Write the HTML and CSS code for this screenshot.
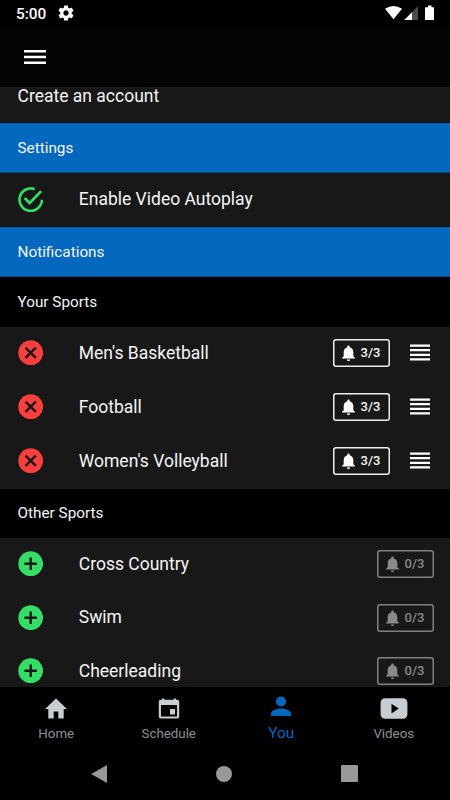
FILE: index.html
```html
<!DOCTYPE html>
<html lang="en">
<head>
    <meta charset="UTF-8">
    <meta name="viewport" content="width=device-width, initial-scale=1.0">
    <title>You</title>
    <link rel="stylesheet" href="styles.css">
</head>
<body>
    <!-- Shared icons -->
    <svg class="sprite" width="0" height="0">
        <symbol id="icon-remove" viewBox="0 0 26 26">
            <circle cx="13" cy="13" r="12.7" fill="#fb3e3e"/>
            <path d="M7.700 7.700l10.600 10.600M18.300 7.700L7.700 18.300" stroke="#181818" stroke-width="2.500"/>
        </symbol>
        <symbol id="icon-add" viewBox="0 0 26 26">
            <circle cx="13" cy="13" r="12.7" fill="#33dd66"/>
            <path d="M13 6.600v12.800M6.600 13h12.800" stroke="#181818" stroke-width="2.500"/>
        </symbol>
        <symbol id="icon-bell" viewBox="4 2 16 20">
            <path d="M12 22c1.100 0 2-.9 2-2h-4c0 1.100.89 2 2 2zm6-6v-5c0-3.070-1.640-5.640-4.500-6.320V4c0-.83-.67-1.500-1.500-1.500s-1.500.67-1.500 1.500v.68C7.630 5.360 6 7.920 6 11v5l-2 2v1h16v-1l-2-2z" fill="currentColor"/>
        </symbol>
        <symbol id="icon-handle" viewBox="0 0 20 17">
            <path d="M0 1.600h20M0 6.200h20M0 10.800h20M0 15.400h20" stroke="#fff" stroke-width="2.300"/>
        </symbol>
    </svg>

    <div class="status-bar">
        <span class="time">5:00</span>
        <svg class="gear" width="16" height="16" viewBox="1.5 1.5 21 21">
            <path fill="#fff" d="M19.430 12.980c.04-.32.07-.64.07-.98s-.03-.66-.07-.98l2.110-1.650c.19-.15.24-.42.12-.64l-2-3.460c-.12-.22-.39-.3-.61-.22l-2.490 1c-.52-.4-1.080-.73-1.690-.98l-.38-2.650C14.460 2.180 14.250 2 14 2h-4c-.25 0-.46.18-.49.42l-.38 2.650c-.61.25-1.170.59-1.690.98l-2.490-1c-.23-.09-.49 0-.61.22l-2 3.460c-.13.22-.07.49.12.64l2.110 1.650c-.04.32-.07.65-.07.98s.03.66.07.98l-2.110 1.650c-.19.15-.24.42-.12.64l2 3.460c.12.22.39.3.61.22l2.490-1c.52.4 1.080.73 1.690.98l.38 2.650c.03.24.24.42.49.42h4c.25 0 .46-.18.49-.42l.38-2.650c.61-.25 1.170-.59 1.690-.98l2.490 1c.23.09.49 0 .61-.22l2-3.460c.12-.22.07-.49-.12-.64l-2.110-1.650zM12 15.500c-1.930 0-3.500-1.570-3.500-3.500s1.570-3.500 3.500-3.500 3.500 1.570 3.500 3.500-1.570 3.500-3.500 3.500z"/>
        </svg>
        <svg class="signals" width="50" height="16" viewBox="0 0 50 16">
            <path fill="#fff" d="M0 3.800Q8.500-1.900 17 3.800L8.500 14.300z"/>
            <path fill="#4d4d4d" d="M19.300 15L33 1.300V15z"/>
            <path fill="#fff" d="M19.300 15L27 7.300V15z"/>
            <path fill="#fff" d="M40 2.200h3V.5h3.500v1.700H49V15h-9z"/>
        </svg>
    </div>

    <div class="app-bar">
        <svg width="22" height="16" viewBox="0 0 22 16">
            <path d="M0 2.200h22M0 8h22M0 13.800h22" stroke="#fff" stroke-width="2.500"/>
        </svg>
    </div>

    <div class="content">
        <div class="row account">Create an account</div>

        <div class="section">Settings</div>
        <div class="row autoplay">
            <svg class="icon" viewBox="0 0 26 26" fill="none" stroke="#33dd66" stroke-width="2.700">
                <path d="M17 2.200A11.500 11.500 0 1 0 24.500 13"/>
                <path d="M6.800 11.300L12 16.400 23.700 4.300"/>
            </svg>
            <span class="name">Enable Video Autoplay</span>
        </div>

        <div class="section">Notifications</div>
        <div class="subsection yours">Your Sports</div>
        <div class="row sport">
            <svg class="icon"><use href="#icon-remove"/></svg>
            <span class="name">Men's Basketball</span>
            <span class="alerts"><svg><use href="#icon-bell"/></svg>3/3</span>
            <svg class="handle"><use href="#icon-handle"/></svg>
        </div>
        <div class="row sport">
            <svg class="icon"><use href="#icon-remove"/></svg>
            <span class="name">Football</span>
            <span class="alerts"><svg><use href="#icon-bell"/></svg>3/3</span>
            <svg class="handle"><use href="#icon-handle"/></svg>
        </div>
        <div class="row sport">
            <svg class="icon"><use href="#icon-remove"/></svg>
            <span class="name">Women's Volleyball</span>
            <span class="alerts"><svg><use href="#icon-bell"/></svg>3/3</span>
            <svg class="handle"><use href="#icon-handle"/></svg>
        </div>

        <div class="subsection">Other Sports</div>
        <div class="row other">
            <svg class="icon"><use href="#icon-add"/></svg>
            <span class="name">Cross Country</span>
            <span class="alerts off"><svg><use href="#icon-bell"/></svg>0/3</span>
        </div>
        <div class="row other">
            <svg class="icon"><use href="#icon-add"/></svg>
            <span class="name">Swim</span>
            <span class="alerts off"><svg><use href="#icon-bell"/></svg>0/3</span>
        </div>
        <div class="row other">
            <svg class="icon"><use href="#icon-add"/></svg>
            <span class="name">Cheerleading</span>
            <span class="alerts off"><svg><use href="#icon-bell"/></svg>0/3</span>
        </div>
    </div>

    <div class="tabs">
        <div class="tab">
            <svg width="28" height="24" viewBox="0 0 28 24">
                <path fill="#c8cdd2" d="M14 1.500L3 12h3.300v9.500h5.400v-7h4.600v7h5.400V12H25z"/>
            </svg>
            <span>Home</span>
        </div>
        <div class="tab">
            <svg width="28" height="24" viewBox="0 0 28 24">
                <path fill="#c8cdd2" fill-rule="evenodd" d="M7 1.500h2.300v1.200h9.400V1.500H21v1.200h1.300q1.900 0 1.900 1.900v15q0 1.900-1.900 1.900H5.700q-1.900 0-1.900-1.900v-15q0-1.900 1.900-1.900H7zM6 8v11.400h16V8z"/>
                <path fill="#c8cdd2" d="M15 12h5v5.500h-5z"/>
            </svg>
            <span>Schedule</span>
        </div>
        <div class="tab active">
            <svg width="28" height="24" viewBox="0 0 28 24">
                <circle cx="14" cy="6.500" r="5.100" fill="#0468be"/>
                <path fill="#0468be" d="M4 21v-2.600c0-3.300 6.700-5 10-5s10 1.700 10 5V21z"/>
            </svg>
            <span>You</span>
        </div>
        <div class="tab">
            <svg width="28" height="24" viewBox="0 0 28 24">
                <rect x=".6" y="1.300" width="26.800" height="20.400" rx="4.500" fill="#c8cdd2"/>
                <path fill="#000" d="M11.500 6.700v9.700l7.200-4.850z"/>
            </svg>
            <span>Videos</span>
        </div>
    </div>

    <div class="system-nav">
        <svg width="16" height="18" viewBox="0 0 16 18"><path fill="#999" d="M16 0v18L.2 9z"/></svg>
        <div class="circle"></div>
        <div class="square"></div>
    </div>
</body>
</html>
```
FILE: styles.css
```css
* {
    box-sizing: border-box;
}
body {
    font-family: Roboto, sans-serif;
    display: flex;
    flex-direction: column;
    width: 450px;
    height: 800px;
    margin: 0;
    overflow: hidden;
    background-color: #000;
    color: #f5f5f5;
}
svg {
    display: block;
    flex: none;
}
.sprite {
    position: absolute;
}

/* Top bars */
.status-bar {
    display: flex;
    align-items: flex-start;
    height: 26px;
    padding: 5px 15px 0 16px;
    flex: none;
}
.time {
    font-size: 15.4px;
    font-weight: 500;
    line-height: 18px;
    width: 41.5px;
    color: #fff;
}
.signals {
    margin-left: auto;
}
.app-bar {
    height: 61px;
    padding: 22.5px 24px 0;
    background-color: #040404;
    flex: none;
}

/* List */
.content {
    height: 600px;
    overflow: hidden;
    background-color: #181818;
    flex: none;
}
.row {
    display: flex;
    align-items: center;
    height: 54px;
    padding: 0 16px 0 18px;
    font-size: 17.5px;
}
.row.account {
    height: 36px;
    padding-bottom: 18px;
    padding-left: 17.5px;
    border-bottom: 1px solid #150808;
}
.row.autoplay {
    height: 54px;
    border-bottom: 1px solid #150808;
}
.row.autoplay .name {
    padding-bottom: 2px;
}
.row.sport {
    padding-bottom: 2px;
}
.row.other {
    height: 53.5px;
    padding-bottom: 0.5px;
}
.icon {
    width: 25.4px;
    height: 25.4px;
    margin-right: 35.4px;
}
.name {
    flex: 1;
    padding-bottom: 1px;
}
.section, .subsection {
    display: flex;
    align-items: center;
    height: 50px;
    padding-left: 17.5px;
    font-size: 15.3px;
}
.section {
    background-color: #0468be;
    border-bottom: 1px solid #0a4a88;
}
.subsection {
    height: 48.5px;
    padding-bottom: 0.5px;
    background-color: #000;
}
.subsection.yours {
    height: 50px;
    padding-bottom: 0;
}
.alerts {
    display: flex;
    align-items: center;
    width: 57px;
    height: 28px;
    padding: 0 0 1px 9px;
    border-radius: 3px;
    box-shadow: inset 0 0 0 1.5px #eee;
    font-size: 13px;
    font-weight: 500;
}
.alerts svg {
    width: 13px;
    height: 16px;
    margin: 1px 5.5px 0 0;
    color: #fff;
}
.alerts.off {
    box-shadow: inset 0 0 0 1.5px #808080;
    color: #8a8a8a;
}
.alerts.off svg {
    color: #8a8a8a;
}
.handle {
    width: 20px;
    height: 17px;
    margin: 0 4px 2px 20px;
}

/* Bottom tabs */
.tabs {
    display: flex;
    height: 60px;
    flex: none;
}
.tab {
    display: flex;
    flex-direction: column;
    align-items: center;
    width: 112.7px;
    padding-top: 10px;
    font-size: 13.3px;
    line-height: 16px;
    color: #8e9092;
}
.tab span {
    margin-top: 5px;
}
.tab.active {
    padding-top: 8px;
    font-size: 15.3px;
    color: #0468be;
}
.tab.active span {
    margin-top: 6px;
}
.system-nav {
    display: flex;
    align-items: center;
    justify-content: space-between;
    height: 54px;
    padding: 0 92px 0 91px;
}
.circle {
    width: 16px;
    height: 16px;
    border-radius: 50%;
    background-color: #999;
}
.square {
    width: 17px;
    height: 17px;
    border-radius: 1px;
    background-color: #999;
}
```
